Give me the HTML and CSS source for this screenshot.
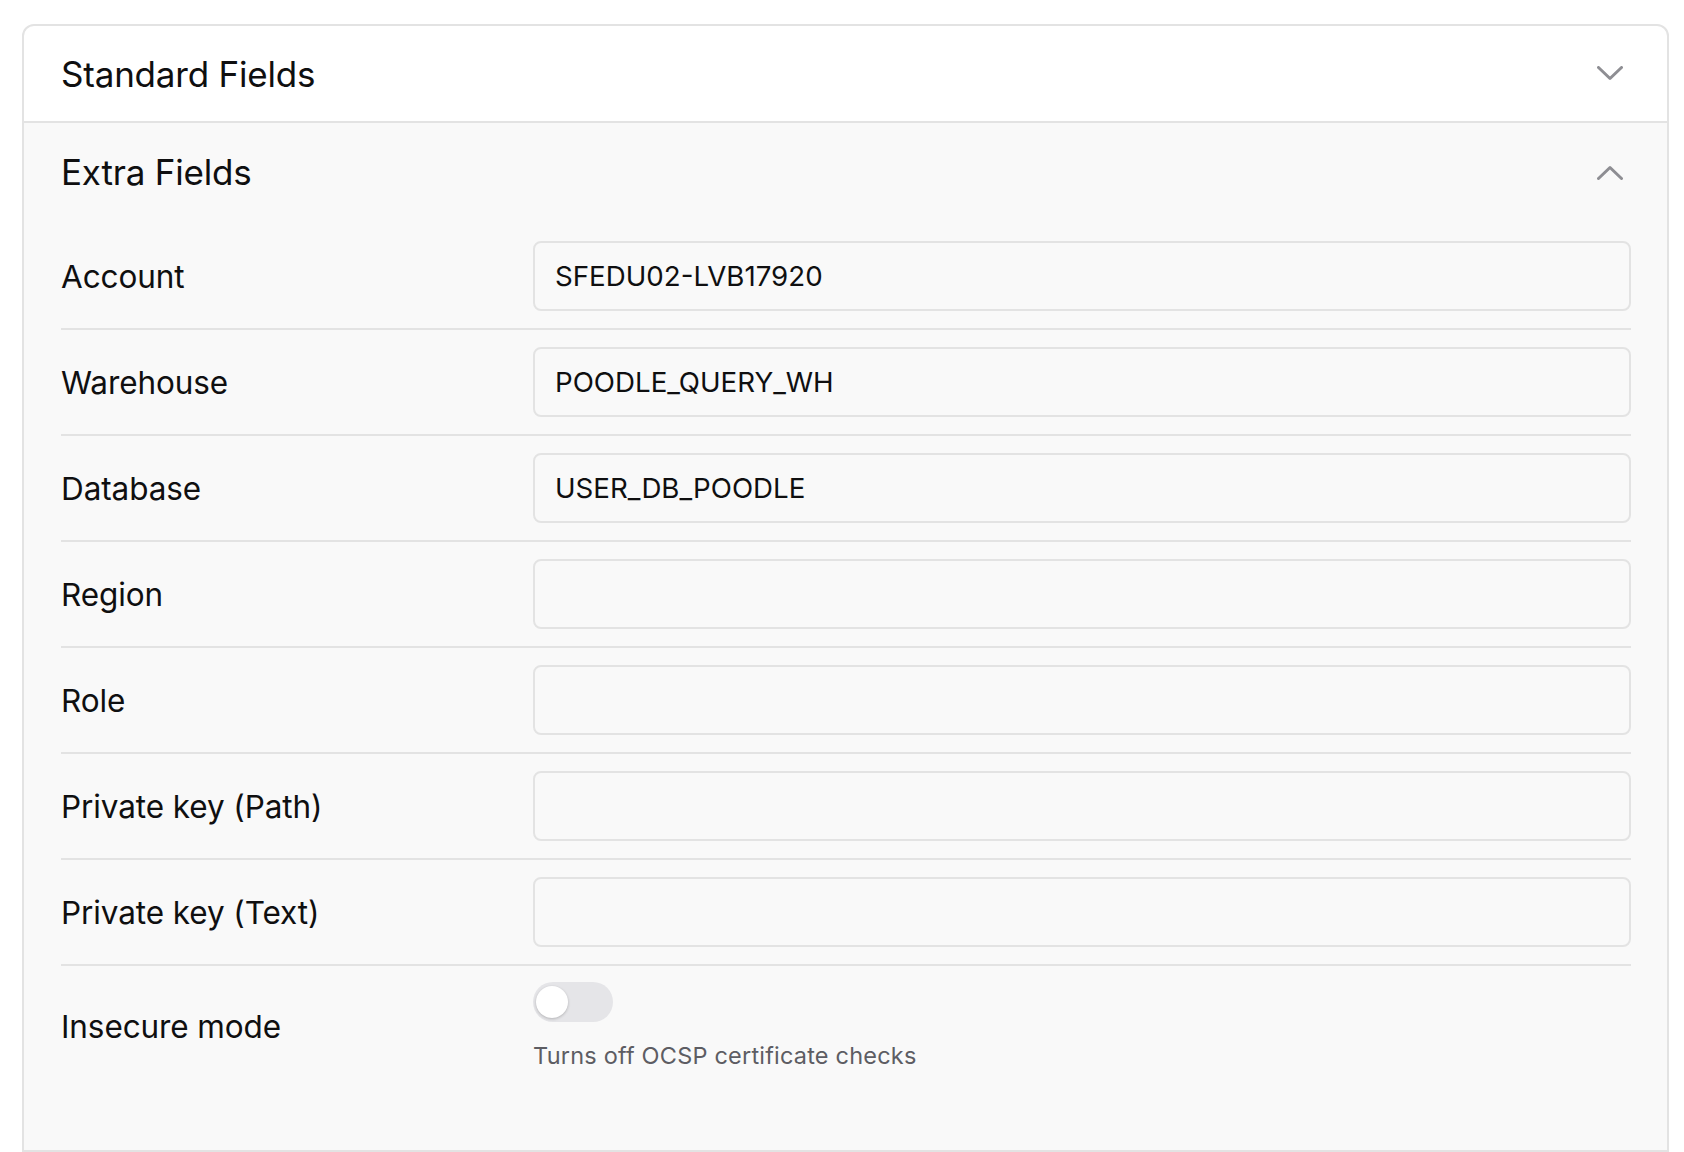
FILE: index.html
```html
<!DOCTYPE html>
<html>
<head>
<meta charset="utf-8">
<link rel="stylesheet" href="styles.css">
</head>
<body>
<div class="panel">
  <div class="section-head standard">
    <span class="section-title">Standard Fields</span>
    <svg class="chev" width="26" height="15" viewBox="0 0 26 15"><path d="M1.5 1.5 L13 12.5 L24.5 1.5" fill="none" stroke="#8e8e93" stroke-width="3" stroke-linecap="round" stroke-linejoin="round"/></svg>
  </div>
  <div class="extra">
    <div class="section-head">
      <span class="section-title">Extra Fields</span>
      <svg class="chev" width="26" height="15" viewBox="0 0 26 15"><path d="M1.5 13.5 L13 2.5 L24.5 13.5" fill="none" stroke="#8e8e93" stroke-width="3" stroke-linecap="round" stroke-linejoin="round"/></svg>
    </div>
    <div class="rows">
      <div class="row"><div class="label">Account</div><div class="field"><div class="input">SFEDU02-LVB17920</div></div></div>
      <div class="row"><div class="label">Warehouse</div><div class="field"><div class="input">POODLE_QUERY_WH</div></div></div>
      <div class="row"><div class="label">Database</div><div class="field"><div class="input">USER_DB_POODLE</div></div></div>
      <div class="row"><div class="label">Region</div><div class="field"><div class="input"></div></div></div>
      <div class="row"><div class="label">Role</div><div class="field"><div class="input"></div></div></div>
      <div class="row"><div class="label">Private key (Path)</div><div class="field"><div class="input"></div></div></div>
      <div class="row"><div class="label">Private key (Text)</div><div class="field"><div class="input"></div></div></div>
      <div class="row last"><div class="label">Insecure mode</div><div class="field">
        <div class="toggle"><div class="knob"></div></div>
        <div class="help">Turns off OCSP certificate checks</div>
      </div></div>
    </div>
  </div>
</div>
</body>
</html>
```
FILE: styles.css
```css
* { box-sizing: border-box; }
html, body { margin: 0; padding: 0; background: #ffffff; }
body {
  font-family: Inter, "Noto Sans", sans-serif;
  color: #0f0f10;
  padding: 24px 15px 0 22px;
}
.panel {
  border: 2px solid #e3e3e3;
  border-radius: 12px 12px 0 0;
  overflow: hidden;
  background: #ffffff;
}
.section-head {
  display: flex;
  align-items: center;
  justify-content: space-between;
  height: 97px;
  padding: 0 44px 0 37px;
}
.section-head.standard {
  border-bottom: 2px solid #e3e3e3;
}
.section-title {
  font-size: 35px;
  font-weight: 400;
  letter-spacing: -0.2px;
}
.extra {
  background: #f9f9f9;
  padding: 0 36px 62px 37px;
}
.extra .section-head {
  height: 98px;
  padding: 0 8px 0 0;
  margin-bottom: 3px;
}
.row {
  display: flex;
  align-items: center;
  padding: 17px 0;
  border-bottom: 2px solid #e3e3e3;
}
.row.last {
  border-bottom: none;
  padding-top: 16px;
}
.label {
  width: 472px;
  flex: none;
  font-size: 31.5px;
  letter-spacing: -0.1px;
}
.field { flex: 1; }
.input {
  height: 70px;
  border: 2px solid #e3e3e3;
  border-radius: 8px;
  background: #f9f9f9;
  display: flex;
  align-items: center;
  padding: 0 20px;
  font-size: 27.7px;
  letter-spacing: 0;
  color: #0f0f10;
}
.toggle {
  width: 80px;
  height: 40px;
  border-radius: 20px;
  background: #e5e5e8;
  position: relative;
}
.knob {
  position: absolute;
  left: 3px;
  top: 4px;
  width: 32px;
  height: 32px;
  border-radius: 50%;
  background: #ffffff;
  box-shadow: 0 1px 3px rgba(0,0,0,0.22);
}
.help {
  margin-top: 19px;
  font-size: 23.5px;
  line-height: 30px;
  color: #5d5d63;
  letter-spacing: 0.2px;
}
```
